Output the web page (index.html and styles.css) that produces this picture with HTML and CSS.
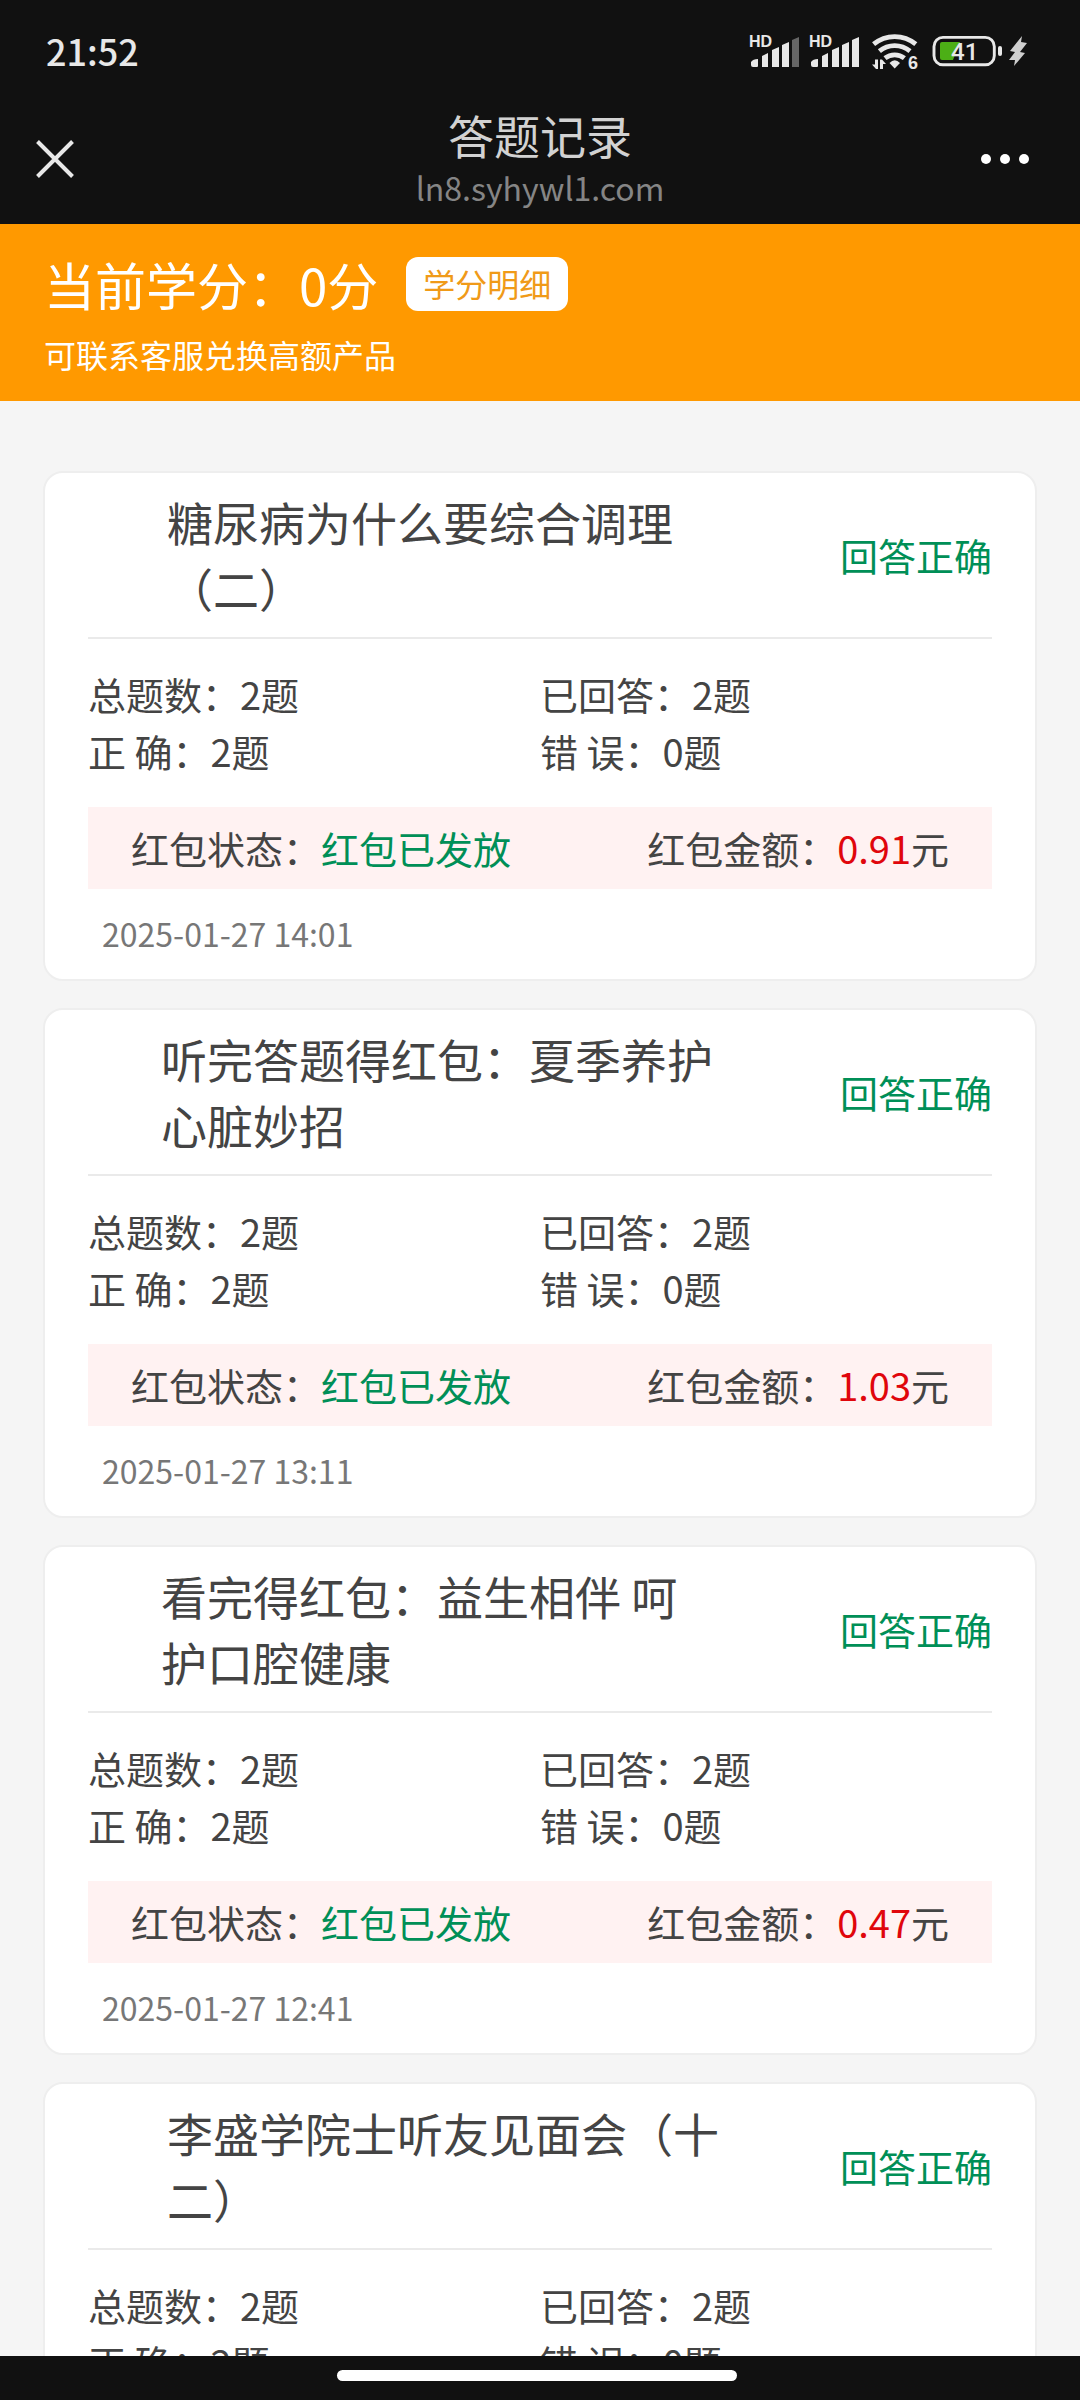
FILE: index.html
```html
<!DOCTYPE html>
<html lang="zh-CN">
<head>
<meta charset="utf-8">
<meta name="viewport" content="width=device-width, initial-scale=1">
<title>答题记录</title>
<link rel="stylesheet" href="styles.css">
</head>
<body>
<div class="status-bar">
  <time class="clock">21:52</time>
  <div class="status-icons">
    <svg class="signal" width="50" height="36" viewBox="0 0 50 36" aria-hidden="true">
      <text x="0" y="13" class="icon-label">HD</text>
      <path d="M2 31V28Q4 25 9 25V32Q9 33 8 33H4Q2 33 2 31ZM13 22L19 19V33H13ZM23 16L30 13V33H23ZM33 11L40 8V33H33Z"/>
      <path class="dim" d="M43 6L50 3V33H43Z"/>
    </svg>
    <svg class="signal" width="50" height="36" viewBox="0 0 50 36" aria-hidden="true">
      <text x="0" y="13" class="icon-label">HD</text>
      <path d="M2 31V28Q4 25 9 25V32Q9 33 8 33H4Q2 33 2 31ZM13 22L19 19V33H13ZM23 16L30 13V33H23ZM33 11L40 8V33H33ZM43 6L50 3V33H43Z"/>
    </svg>
    <svg class="wifi" width="48" height="36" viewBox="0 0 48 36" aria-hidden="true">
      <g fill="none" stroke="#e8e8e8" stroke-width="4.8">
        <path d="M1.6 10.2A33 33 0 0 1 43.8 10.2"/>
        <path d="M7.4 17.2A24 24 0 0 1 38 17.2"/>
        <path d="M13 24.2A15.500 15.500 0 0 1 32.400 24.200"/>
      </g>
      <path d="M17.500 29Q22.700 23.500 28 29L22.700 34.500Z"/>
      <path d="M6 25.500V35H4L0 30.500H3V25.500ZM8 35V25.500H10L14 30H11V35Z"/>
      <text x="36" y="35" class="icon-digit">6</text>
    </svg>
    <svg class="battery" width="70" height="36" viewBox="0 0 70 36" aria-hidden="true">
      <rect x="2" y="3.400" width="60.300" height="27.400" rx="9" fill="none" stroke="#e8e8e8" stroke-width="2.900"/>
      <path d="M10 8H28L21 26H10Q8 26 8 24V10Q8 8 10 8Z" fill="#4caf16"/>
      <rect x="66" y="12" width="4" height="10" rx="2"/>
      <text x="19" y="26" class="battery-level">41</text>
    </svg>
    <svg class="bolt" width="18" height="36" viewBox="0 0 18 36" aria-hidden="true">
      <path d="M13 2L1 17L6 18L0 26H6L5 32L16 19L11 18L18 9L12 8Z" fill="#cfcfcf"/>
    </svg>
  </div>
</div>

<header class="nav">
  <button class="icon-button" type="button" aria-label="关闭">
    <svg width="38" height="38" viewBox="0 0 38 38"><path d="M1.500 1.500L36.500 36.500M36.500 1.500L1.500 36.500" stroke="#e8e8e8" stroke-width="4"/></svg>
  </button>
  <div class="nav-heading">
    <h1 class="nav-title">答题记录</h1>
    <p class="nav-url">ln8.syhywl1.com</p>
  </div>
  <button class="icon-button icon-button--end" type="button" aria-label="更多">
    <svg width="50" height="38" viewBox="0 0 50 38" fill="#fff"><circle cx="6" cy="19" r="5"/><circle cx="25" cy="19" r="5"/><circle cx="44" cy="19" r="5"/></svg>
  </button>
</header>

<section class="score">
  <div class="score-row">
    <span class="score-value">当前学分：0分</span>
    <button class="score-detail" type="button">学分明细</button>
  </div>
  <p class="score-note">可联系客服兑换高额产品</p>
</section>

<main class="records">
  <article class="card">
    <div class="card-head">
      <h2 class="card-title card-title--inset">糖尿病为什么要综合调理（二）</h2>
      <span class="result">回答正确</span>
    </div>
    <div class="stats">
      <span>总题数：2题</span><span>已回答：2题</span>
      <span>正 确：2题</span><span>错 误：0题</span>
    </div>
    <div class="reward">
      <span>红包状态：<span class="ok">红包已发放</span></span>
      <span>红包金额：<span class="amount">0.91</span>元</span>
    </div>
    <time class="date">2025-01-27 14:01</time>
  </article>

  <article class="card">
    <div class="card-head">
      <h2 class="card-title">听完答题得红包：夏季养护心脏妙招</h2>
      <span class="result">回答正确</span>
    </div>
    <div class="stats">
      <span>总题数：2题</span><span>已回答：2题</span>
      <span>正 确：2题</span><span>错 误：0题</span>
    </div>
    <div class="reward">
      <span>红包状态：<span class="ok">红包已发放</span></span>
      <span>红包金额：<span class="amount">1.03</span>元</span>
    </div>
    <time class="date">2025-01-27 13:11</time>
  </article>

  <article class="card">
    <div class="card-head">
      <h2 class="card-title">看完得红包：益生相伴 呵护口腔健康</h2>
      <span class="result">回答正确</span>
    </div>
    <div class="stats">
      <span>总题数：2题</span><span>已回答：2题</span>
      <span>正 确：2题</span><span>错 误：0题</span>
    </div>
    <div class="reward">
      <span>红包状态：<span class="ok">红包已发放</span></span>
      <span>红包金额：<span class="amount">0.47</span>元</span>
    </div>
    <time class="date">2025-01-27 12:41</time>
  </article>

  <article class="card">
    <div class="card-head">
      <h2 class="card-title card-title--inset">李盛学院士听友见面会（十二）</h2>
      <span class="result">回答正确</span>
    </div>
    <div class="stats">
      <span>总题数：2题</span><span>已回答：2题</span>
      <span>正 确：2题</span><span>错 误：0题</span>
    </div>
  </article>
</main>

<footer class="home-bar"><span class="home-pill"></span></footer>
</body>
</html>
```
FILE: styles.css
```css
* {
  box-sizing: border-box;
  margin: 0;
  padding: 0;
}

body {
  display: flex;
  flex-direction: column;
  height: 100vh;
  overflow: hidden;
  background: #f5f5f5;
  color: #444;
  font-family: "Noto Sans CJK SC", sans-serif;
  font-size: 38px;
  line-height: 57px;
}

button {
  border: 0;
  background: none;
  font: inherit;
}

svg {
  display: block;
}

/* System status bar */
.status-bar {
  flex: none;
  display: flex;
  justify-content: space-between;
  align-items: flex-start;
  height: 98px;
  padding: 22px 53px 0 46px;
  background: #111;
  color: #e8e8e8;
}

.clock {
  font-size: 36px;
  font-weight: 500;
}

.status-icons {
  display: flex;
  padding-top: 12px;
  fill: #e8e8e8;
}

.signal {
  margin-right: 10px;
}

.wifi {
  margin: 0 12px 0 3px;
}

.battery {
  margin-right: 7px;
}

.dim {
  fill: #666;
}

.icon-label {
  font: bold 16px "Liberation Sans", sans-serif;
}

.icon-digit {
  font: bold 18px "Liberation Sans", sans-serif;
}

.battery-level {
  font: 500 24px Roboto, sans-serif;
}

/* Page title bar */
.nav {
  flex: none;
  display: grid;
  grid-template-columns: 1fr auto 1fr;
  align-items: center;
  height: 126px;
  padding: 0 50px 4px 36px;
  background: #111;
}

.icon-button--end {
  justify-self: end;
}

.icon-button {
  width: max-content;
  cursor: pointer;
}

.nav-heading {
  padding: 0 0 4px 14px;
  text-align: center;
}

.nav-title {
  color: #d2d2d2;
  font-size: 46px;
  font-weight: 400;
  line-height: 60px;
}

.nav-url {
  color: #858585;
  font-size: 32px;
  line-height: 46px;
}

/* Score banner */
.score {
  flex: none;
  padding: 33px 44px 23px;
  background: #ff9900;
  color: #fff;
}

.score-row {
  display: flex;
  align-items: center;
  gap: 28px;
  height: 54px;
}

.score-value {
  font-size: 51px;
}

.score-detail {
  height: 54px;
  padding: 0 17px;
  border-radius: 12px;
  background: #fff;
  color: #f09a18;
  font-size: 32px;
  line-height: 52px;
  padding-bottom: 2px;
  cursor: pointer;
}

.score-note {
  margin-top: 19px;
  font-size: 32px;
  line-height: 48px;
}

/* Answer records */
.records {
  flex: 1;
  min-height: 0;
  display: flex;
  flex-direction: column;
  gap: 27px;
  padding: 70px 43px 0;
  overflow: hidden;
}

.card {
  flex: none;
  padding: 0 43px 22px;
  border: 2px solid #eee;
  border-radius: 20px;
  background: #fff;
}

.card-head {
  display: flex;
  justify-content: space-between;
  align-items: center;
  padding: 15px 0 17px 73px;
  border-bottom: 2px solid #eaeaea;
}

.card-title {
  width: 558px;
  font-size: 46px;
  font-weight: 400;
  line-height: 66px;
}

.card-title--inset {
  padding-left: 6px;
}

.result {
  color: #008f57;
  white-space: nowrap;
}

.stats {
  display: grid;
  grid-template-columns: 1fr 1fr;
  padding: 26px 0 28px;
}

.reward {
  display: flex;
  justify-content: space-between;
  padding: 12px 43px 13px;
  background: #fff2f2;
}

.ok {
  color: #008f57;
}

.amount {
  color: #e0060c;
}

.date {
  display: block;
  padding: 20px 14px 0;
  color: #777;
  font-size: 32px;
  line-height: 48px;
}

/* Gesture bar */
.home-bar {
  flex: none;
  display: flex;
  justify-content: center;
  align-items: center;
  height: 44px;
  padding: 0 6px 6px 0;
  background: #111;
}

.home-pill {
  width: 400px;
  height: 11px;
  border-radius: 6px;
  background: #fff;
}
```
